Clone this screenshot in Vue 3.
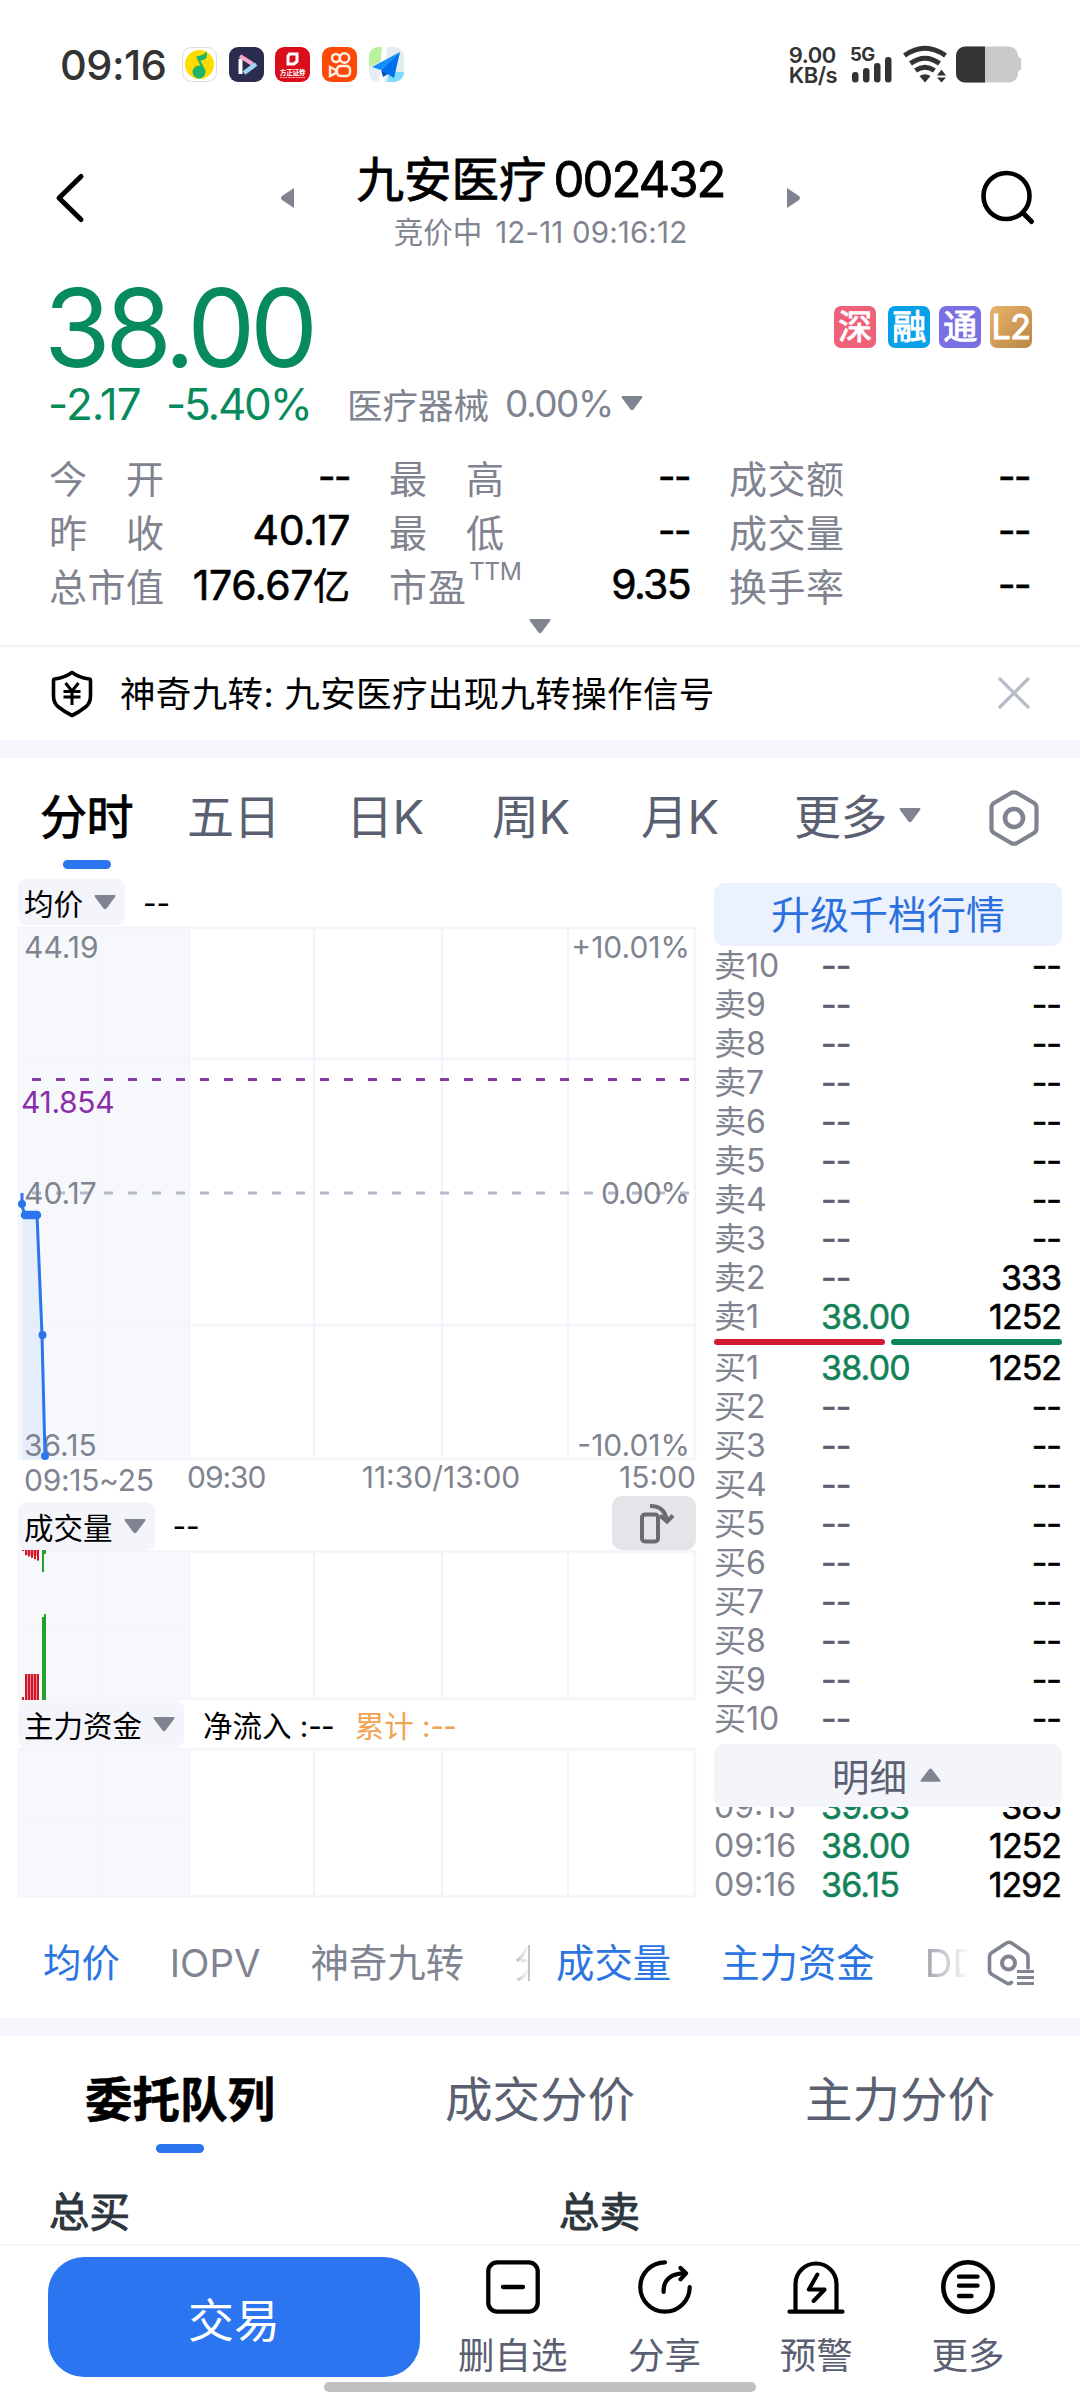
<script setup>
const stats = [
  { label: ['今', '开'], value: '--' },
  { label: ['最', '高'], value: '--' },
  { label: ['成', '交', '额'], value: '--' },
  { label: ['昨', '收'], value: '40.17', wide: true },
  { label: ['最', '低'], value: '--' },
  { label: ['成', '交', '量'], value: '--' },
  { label: ['总', '市', '值'], value: '176.67', unit: '亿', wide: true },
  { label: ['市', '盈'], sup: 'TTM', value: '9.35' },
  { label: ['换', '手', '率'], value: '--' }
]
const asks = [10, 9, 8, 7, 6, 5, 4, 3, 2, 1].map((n) => ({
  label: '卖' + n,
  price: n === 1 ? '38.00' : '--',
  vol: n === 1 ? '1252' : n === 2 ? '333' : '--'
}))
const bids = [1, 2, 3, 4, 5, 6, 7, 8, 9, 10].map((n) => ({
  label: '买' + n,
  price: n === 1 ? '38.00' : '--',
  vol: n === 1 ? '1252' : '--'
}))
const ticks = [
  { label: '09:15', price: '39.83', vol: '385' },
  { label: '09:16', price: '38.00', vol: '1252' },
  { label: '09:16', price: '36.15', vol: '1292' }
]
const gridX = [296, 424, 550]
const redBars = [8, 11, 14, 17, 20]
</script>

<template>
  <div class="screen">
    <div class="status">
      <span class="clock">09:16</span>
      <div class="apps">
        <svg viewBox="0 0 35 35"><rect x=".5" y=".5" width="34" height="34" rx="9" fill="#fff" stroke="#dcdcdc" /><circle cx="17.5" cy="17.5" r="14.5" fill="#ffdc00" /><circle cx="17" cy="25" r="6.5" fill="#1db46b" /><path d="M21.5 25 14 9.500Q20 9 25 4.500L24.500 11Q21 13.500 18.500 13.500L23.500 24Z" fill="#1db46b" /></svg>
        <svg viewBox="0 0 35 35"><rect width="35" height="35" rx="9" fill="#2c2b50" /><path d="M11.500 12v15" stroke="#fff" stroke-width="4" /><path d="m11 9 12.500 8" stroke="#f7a8cb" stroke-width="4" /><path d="m15 26 12-9" stroke="#9bd3f5" stroke-width="4.500" /></svg>
        <svg viewBox="0 0 35 35"><rect width="35" height="35" rx="9" fill="#d90d1c" /><path d="M14.500 7H22v7.500l-3 2.500h-6V9Z" fill="none" stroke="#fff" stroke-width="3" /><text x="17.500" y="28" font-size="6.800" font-weight="700" fill="#fff" text-anchor="middle">方正证券</text><path d="M5 30.500h25" stroke="#fff" stroke-width="1" stroke-dasharray="2 .6" opacity=".7" /></svg>
        <svg viewBox="0 0 35 35"><rect width="35" height="35" rx="9" fill="#ff4906" /><g fill="none" stroke="#fff3e8" stroke-width="2.400"><circle cx="14" cy="11" r="4" /><circle cx="22.500" cy="11" r="4.700" /><rect x="15" y="19" width="13" height="10" rx="3.500" /><path d="m8 20 6 3v3l-6 3Z" /></g></svg>
        <svg viewBox="0 0 35 35"><rect width="35" height="35" rx="9" fill="#e4eef0" /><path d="M9 0h4v14L0 20V9a9 9 0 0 1 9-9Z" fill="#baf19c" /><path d="M20 25h15a10 10 0 0 1-10 10h-7Z" fill="#79dcfb" /><path d="M13 0h5L15 35h-5Z" fill="#fff" /><path d="M31 5 3 20l9 3Z" fill="#138cff" /><path d="M31 5 12 23l13 8Z" fill="#006fee" /><path d="m12 23 2 7 5-3Z" fill="#0051c5" /></svg>
      </div>
      <div class="speed"><span>9.00</span><span>KB/s</span></div>
      <svg class="sys" viewBox="0 0 172 40">
        <text x="0" y="15" font-size="18.500" font-weight="700" letter-spacing="-.5" fill="#333">5G</text>
        <g fill="#333"><rect x="2" y="26" width="6.500" height="10.500" rx="3" /><rect x="13" y="22" width="6.500" height="14.500" rx="3" /><rect x="24" y="17" width="6.500" height="19.500" rx="3" /><rect x="35" y="11" width="6.500" height="25.500" rx="3" /></g>
        <g fill="none" stroke="#333" stroke-width="5"><path d="M54.500 9.500Q75-5 95.500 9.500" /><path d="M60.500 17.500Q75 7 89.500 17.500" /><path d="M65.500 24.500Q75 18 84.500 24.500" /></g>
        <path d="M69.500 30Q75 26.500 80.500 30L75 36.500Z" fill="#333" /><path d="m87 29.500 4.500-6 4.500 6zm0 2h9l-4.500 5Z" fill="#333" />
        <path d="M115 .5h44a9 9 0 0 1 9 9V11q3 0 3 3v8q0 3-3 3v2a9 9 0 0 1-9 9.500h-44a9 9 0 0 1-9-9.500V9.500a9 9 0 0 1 9-9Z" fill="#cacaca" /><path d="M135 .5v36h-20a9 9 0 0 1-9-9.500V9.500a9 9 0 0 1 9-9Z" fill="#333" />
      </svg>
    </div>

    <header class="header">
      <svg class="back" viewBox="0 0 30 50"><path d="M26 3.500 4 25l22 21.500" fill="none" stroke="#000" stroke-width="5" stroke-linecap="round" stroke-linejoin="round" /></svg>
      <svg class="prev" viewBox="0 0 15 22"><path d="M14 1v20L2 13Q0 11 2 9Z" fill="#7f8490" /></svg>
      <div class="title">
        <h1>九安医疗<span>002432</span></h1>
        <p>竞价中<span>12-11 09:16:12</span></p>
      </div>
      <svg class="next" viewBox="0 0 15 22"><path d="M1 1v20l12-8q2-2 0-4Z" fill="#7f8490" /></svg>
      <svg class="search" viewBox="0 0 54 54"><circle cx="25.500" cy="25" r="23" fill="none" stroke="#000" stroke-width="4.600" /><path d="m42.500 42.500 8 8" stroke="#000" stroke-width="5" stroke-linecap="round" /></svg>
    </header>

    <section class="quote">
      <div class="price-row">
        <strong>38.00</strong>
        <div class="tags"><i class="t1">深</i><i class="t2">融</i><i class="t3">通</i><i class="t4">L2</i></div>
      </div>
      <div class="change-row">
        <span class="chg">-2.17</span><span class="pct">-5.40%</span><span class="sector">医疗器械</span><span class="spct">0.00%</span>
        <svg class="caret" viewBox="0 0 22 15"><path d="M1 0h20q1 1 0 2l-8.500 11.500q-1.500 1.500-3 0L1 2q-1-1 0-2Z" fill="#7f8490" /></svg>
      </div>
      <div class="stats">
        <div v-for="(s, i) in stats" :key="i" class="stat">
          <span class="lab" :class="{ pe: s.sup }"><b v-for="c in s.label" :key="c">{{ c }}</b><sup v-if="s.sup">{{ s.sup }}</sup></span>
          <span class="val" :class="{ none: s.value === '--', wide: s.wide }">{{ s.value }}<em v-if="s.unit">{{ s.unit }}</em></span>
        </div>
      </div>
      <svg class="caret expand" viewBox="0 0 22 15"><path d="M1 0h20q1 1 0 2l-8.500 11.500q-1.500 1.500-3 0L1 2q-1-1 0-2Z" fill="#7f8490" /></svg>
    </section>

    <div class="notice">
      <svg class="shield" viewBox="0 0 42 48"><path d="M21 2.500Q29 8 38.500 9q1 0 1 2v15q0 7-5 11-7 5.500-13.500 8.500Q14.500 42.500 7.500 37q-5-4-5-11V11q0-2 1-2Q13 8 21 2.500Z" fill="none" stroke="#000" stroke-width="3.600" stroke-linejoin="round" /><path d="m14.500 13 6.500 8 6.500-8M12.500 21.500h17M12.500 27h17M21 21v14" fill="none" stroke="#000" stroke-width="3" /></svg>
      <span>神奇九转: 九安医疗出现九转操作信号</span>
      <svg class="close" viewBox="0 0 32 32"><path d="m2 2 28 28M30 2 2 30" stroke="#b6bcc8" stroke-width="3.200" stroke-linecap="round" /></svg>
    </div>
    <div class="band"></div>

    <nav class="tabs">
      <span class="on">分时</span><span>五日</span><span>日K</span><span>周K</span><span>月K</span><span class="more">更多</span>
      <svg class="caret" viewBox="0 0 22 15"><path d="M1 0h20q1 1 0 2l-8.500 11.500q-1.500 1.500-3 0L1 2q-1-1 0-2Z" fill="#7f8490" /></svg>
      <svg class="gear" viewBox="0 0 50 56"><path d="M22 3q3-1.500 6 0l17 10q2.500 1.500 2.500 4.500v21q0 3-2.500 4.500L28 53q-3 1.500-6 0L5 43q-2.500-1.500-2.500-4.500v-21Q2.500 14.500 5 13Z" fill="none" stroke="#7f8490" stroke-width="4.200" /><circle cx="25" cy="28" r="9" fill="none" stroke="#7f8490" stroke-width="4.600" /></svg>
    </nav>

    <div class="body">
      <div class="charts">
        <div class="bar b1"><span class="pill">均价<svg class="caret" viewBox="0 0 22 15"><path d="M1 0h20q1 1 0 2l-8.500 11.500q-1.500 1.500-3 0L1 2q-1-1 0-2Z" fill="#7f8490" /></svg></span><span class="dash">--</span></div>
        <svg class="plot" width="678" height="576" viewBox="0 0 678 576">
          <rect width="172" height="534" fill="#f7f8fc" />
          <g stroke="#f3f5fa" stroke-width="2.500">
            <path d="M0 2h678M0 133h678M0 399h678M0 533h678" />
            <path d="M84 0v534M171 0v534M1 0v534M677 0v534" /><path v-for="x in gridX" :key="x" :d="`M${x} 0v534`" />
          </g>
          <path d="M14 153.500h658" stroke="#883aa6" stroke-width="2.800" stroke-dasharray="9 15" />
          <path d="M14 267h664" stroke="#b4bac8" stroke-width="3" stroke-dasharray="9 15" />
          <path d="M4 268v10l2 11h15l3 120 3 124H4Z" fill="#2b75ee" opacity=".08" />
          <g class="ax" font-size="30" fill="#7f8490">
            <text x="6" y="31.500">44.19</text><text x="672" y="31.500" text-anchor="end">+10.01%</text>
            <text x="6" y="278">40.17</text><text class="tight" x="671" y="278" text-anchor="end">0.00%</text>
            <text x="6" y="529.500">36.15</text><text x="672" y="529.500" text-anchor="end">-10.01%</text>
            <text class="snug" x="6" y="565">09:15~25</text><text class="tight" x="169" y="562">09:30</text><text x="423" y="562" text-anchor="middle">11:30/13:00</text><text x="678" y="562" text-anchor="end">15:00</text>
            <text class="snug" x="3" y="187" fill="#8b2da8">41.854</text>
          </g>
          <path d="M4 267v13l3 9h12l5 120 3 121" fill="none" stroke="#2b75ee" stroke-width="3" />
          <path d="M7 289h12" stroke="#2b75ee" stroke-width="8.500" stroke-linecap="round" />
          <g fill="#2b75ee"><circle cx="4" cy="278" r="4" /><circle cx="24.500" cy="409" r="4" /><circle cx="27" cy="530" r="4" /></g>
        </svg>
        <div class="bar b2"><span class="pill">成交量<svg class="caret" viewBox="0 0 22 15"><path d="M1 0h20q1 1 0 2l-8.500 11.500q-1.500 1.500-3 0L1 2q-1-1 0-2Z" fill="#7f8490" /></svg></span><span class="dash">--</span>
          <span class="rotate"><svg viewBox="0 0 84 54"><rect x="30" y="18.500" width="16" height="27" rx="3" fill="none" stroke="#696b70" stroke-width="4" /><path d="M38 10q15 0 17 15M48 19.500l7 6 6-6" fill="none" stroke="#696b70" stroke-width="4" /></svg></span>
        </div>
        <svg class="plot" width="678" height="150" viewBox="0 0 678 150">
          <rect width="172" height="150" fill="#f7f8fc" />
          <path d="M0 1.500h678M0 148.500h678M0 74.500h171M84 0v150M171 0v150M1 0v150M677 0v150M296 0v150M424 0v150M550 0v150" stroke="#f3f5fa" stroke-width="2.500" />
          <rect x="7" y="124" width="14" height="26" fill="#ec8f98" /><rect x="7" y="0" width="14" height="5.500" fill="#ec8f98" />
          <g fill="#cf1528"><rect x="4" y="0" width="2" height="1" /><rect x="4" y="147" width="2" height="3" /><g v-for="(x, i) in redBars" :key="x"><rect :x="x - 1" y="124" width="2" height="26" /><rect :x="x - 1" y="0" width="2" :height="5 + i * 1.4" /></g></g>
          <path d="M24 67h2v-3h2v86h-4ZM24 0h4v4h-2v18h-2Z" fill="#25a02d" />
        </svg>
        <div class="bar b3"><span class="pill">主力资金<svg class="caret" viewBox="0 0 22 15"><path d="M1 0h20q1 1 0 2l-8.500 11.500q-1.500 1.500-3 0L1 2q-1-1 0-2Z" fill="#7f8490" /></svg></span><span class="flow">净流入 :<u>--</u></span><span class="sum">累计 :<u>--</u></span></div>
        <svg class="plot" width="678" height="150" viewBox="0 0 678 150">
          <rect width="172" height="150" fill="#f7f8fc" />
          <path d="M0 1.500h678M0 148.500h678M0 75.500h171M84 0v150M171 0v150M1 0v150M677 0v150M296 0v150M424 0v150M550 0v150" stroke="#f3f5fa" stroke-width="2.500" />
        </svg>
      </div>

      <aside class="book">
        <div class="upgrade">升级千档行情</div>
        <div v-for="r in asks" :key="r.label" class="row"><span>{{ r.label }}</span><span :class="['p', { none: r.price === '--' }]">{{ r.price }}</span><span :class="['v', { none: r.vol === '--' }]">{{ r.vol }}</span></div>
        <div class="ratio"><i></i><i></i></div>
        <div v-for="r in bids" :key="r.label" class="row"><span>{{ r.label }}</span><span :class="['p', { none: r.price === '--' }]">{{ r.price }}</span><span :class="['v', { none: r.vol === '--' }]">{{ r.vol }}</span></div>
        <div class="detail">明细<svg viewBox="0 0 22 14"><path d="M1 14h20q1-1 0-2L12.500 1q-1.500-1.500-3 0L1 12q-1 1 0 2Z" fill="#7f8490" /></svg></div>
        <div class="ticks"><div v-for="(r, i) in ticks" :key="i" class="row"><span>{{ r.label }}</span><span class="p">{{ r.price }}</span><span class="v">{{ r.vol }}</span></div></div>
      </aside>
    </div>

    <div class="indicators">
      <div class="left"><span class="act">均价</span><span>IOPV</span><span>神奇九转</span><span class="cut">分时</span></div>
      <i class="sep"></i>
      <div class="right"><span class="act">成交量</span><span class="act">主力资金</span><span class="cut">DDX</span></div>
      <svg viewBox="0 0 48 46"><path d="M41 28V17q0-3-2.500-4.500L24.500 3q-2.500-1.500-5 0L5 12.500Q2.500 14 2.500 17v13q0 3 2.500 4.500l14.500 8.500q2.500 1.500 5-.5" fill="none" stroke="#7f8490" stroke-width="3.600" stroke-linecap="round" /><circle cx="21.500" cy="23" r="6.500" fill="none" stroke="#7f8490" stroke-width="4" /><path d="M30 31.500h17M30 37.500h17M30 43.500h17" stroke="#7f8490" stroke-width="3.200" /></svg>
    </div>
    <div class="band"></div>

    <div class="subtabs"><span class="on">委托队列</span><span>成交分价</span><span>主力分价</span></div>
    <div class="totals"><span>总买</span><span>总卖</span></div>

    <footer class="footer">
      <button>交易</button>
      <div class="act a1"><svg viewBox="0 0 58 56"><rect x="4.300" y="3.300" width="49.400" height="49.400" rx="9" fill="none" stroke="#000" stroke-width="4.300" /><path d="M19 28h20" stroke="#000" stroke-width="4.300" stroke-linecap="round" /></svg><span>删自选</span></div>
      <div class="act a2"><svg viewBox="0 0 58 56"><g fill="none" stroke="#000" stroke-width="4.200" stroke-linecap="round" stroke-linejoin="round"><path d="M29 3.300A24.700 24.700 0 1 0 53.700 28" /><path d="M27.600 33q-.5-18.500 22-18.800M44.500 9l5.500 5.300-5.500 6" /></g></svg><span>分享</span></div>
      <div class="act a3"><svg viewBox="0 0 58 56"><g fill="none" stroke="#000" stroke-width="4.200" stroke-linecap="round" stroke-linejoin="round"><path d="M8.500 51.500V25a20.500 20.500 0 0 1 41 0v26.500M2.500 52.700h53" /><path d="m30.400 15.600-8.600 14.900h15.800L26.600 42" stroke-width="4" /></g></svg><span>预警</span></div>
      <div class="act a4"><svg viewBox="0 0 58 56"><circle cx="29" cy="28" r="24.700" fill="none" stroke="#000" stroke-width="4.600" /><path d="M20 17.600h18.500M20 26.600h18.500M20 37h12.500" stroke="#000" stroke-width="4.400" stroke-linecap="round" /></svg><span>更多</span></div>
      <div class="home"></div>
    </footer>
  </div>
</template>

<style>
body { background: #fff; }
</style>

<style scoped>
* { box-sizing: border-box; }
.screen { width: 1080px; height: 2392px; overflow: hidden; background: #fff; color: #000; font-family: Inter, "Noto Sans CJK SC", sans-serif; letter-spacing: -.03em; }
i, em { font-style: normal; }
u { text-decoration: none; }
svg { display: block; flex: none; overflow: visible; }
.caret { width: 22px; height: 15px; }

.status { height: 130px; padding: 43px 0 0 60px; display: flex; align-items: flex-start; }
.clock { width: 122px; font-size: 41.500px; line-height: 44px; font-weight: 500; color: #333; }
.apps { display: flex; gap: 11.700px; padding-top: 4px; }
.apps svg { width: 35px; height: 35px; }
.speed { margin-left: 385px; width: 61px; padding-top: 2px; display: flex; flex-direction: column; font-size: 22px; line-height: 20px; font-weight: 600; color: #333; }
.sys { width: 172px; height: 40px; margin-top: 3px; }

.header { height: 140px; display: flex; align-items: flex-start; }
.back { width: 30px; height: 50px; margin: 43px 0 0 55px; }
.prev { width: 15px; height: 22px; margin: 57px 0 0 195px; }
.title { width: 491px; text-align: center; padding-top: 18px; }
h1 { margin: 0; font-size: 47.500px; line-height: 64px; font-weight: 400; letter-spacing: 0; -webkit-text-stroke: .8px #000; }
h1 span { margin-left: 7px; font-size: 49px; letter-spacing: -.04em; }
p { margin: 3px 0 0; font-size: 29.500px; line-height: 34px; color: #7f8490; letter-spacing: 0; }
p span { margin-left: 13px; letter-spacing: .005em; }
.next { width: 15px; height: 22px; margin-top: 57px; }
.search { width: 54px; height: 54px; margin: 41px 0 0 180px; }

.quote { height: 375px; padding: 0 48px; display: flex; flex-direction: column; }
.price-row { height: 107px; display: flex; justify-content: space-between; color: #078b5c; }
.price-row strong { margin-left: -4px; font-size: 108px; line-height: 115px; font-weight: 400; letter-spacing: -.05em; }
.tags { display: flex; padding-top: 36px; gap: 9px; }
.tags i { width: 42px; height: 42px; border-radius: 7px; color: #fff; font-size: 34px; line-height: 41px; text-align: center; font-weight: 400; -webkit-text-stroke: 1px #fff; }
.t1 { background: #ef6079; margin-right: 3px; }
.t2 { background: #08a0e8; }
.t3 { background: #7b6fe4; }
.t4 { background: linear-gradient(135deg, #e9b36c, #ba8645); }
.change-row { height: 53px; display: flex; align-items: center; font-size: 44px; color: #078b5c; }
.chg { width: 118px; letter-spacing: -.02em; }
.pct { width: 181px; letter-spacing: -.05em; }
.sector { width: 158px; font-size: 35.500px; letter-spacing: 0; color: #7f8490; }
.spct { width: 116px; font-size: 37px; color: #7f8490; letter-spacing: -.04em; }
.stats { margin-top: 19px; display: grid; grid-template-columns: repeat(3, 302px); column-gap: 38px; grid-auto-rows: 54px; }
.stat { display: flex; justify-content: space-between; align-items: center; padding-left: 1px; }
.lab { width: 115px; display: flex; justify-content: space-between; font-size: 38px; color: #7f8490; }
.lab b { font-weight: 400; letter-spacing: 0; }
.pe { position: relative; width: 77px; }
sup { position: absolute; left: 80px; top: -1px; font-size: 24.500px; line-height: 30px; }
.val { display: flex; align-items: baseline; font-size: 41px; font-weight: 400; letter-spacing: -.04em; -webkit-text-stroke: .6px #000; }
.val.wide { letter-spacing: -.01em; }
.val em { font-size: 37px; letter-spacing: 0; }
.val.none { font-size: 38px; }
.expand { margin: 8px 0 0 481px; }

.notice { height: 95px; border-top: 2px solid #f2f3f7; display: flex; align-items: center; padding: 0 50px 0 51px; font-size: 35.500px; letter-spacing: .01em; }
.shield { width: 42px; height: 48px; }
.notice span { margin-left: 27px; flex: 1; padding-bottom: 4px; }
.close { width: 32px; height: 32px; margin-bottom: 1px; }
.band { height: 18px; background: #f4f6fb; }

.tabs { height: 121px; padding: 17px 0 0 40px; display: flex; align-items: flex-start; font-size: 47px; line-height: 84px; color: #5a6072; letter-spacing: -.01em; }
.tabs span { width: 147px; }
.tabs span:nth-child(2) { width: 159px; }
.tabs span:nth-child(3) { width: 146px; }
.tabs span:nth-child(4) { width: 149px; }
.tabs span:nth-child(5) { width: 153px; }
.tabs .more { width: 105px; }
.tabs .on { color: #000; position: relative; -webkit-text-stroke: 1px #000; }
.tabs .on::after { content: ''; position: absolute; left: 23px; top: 85px; width: 48px; height: 9px; border-radius: 5px; background: #2b75ee; }
.tabs .caret { margin-top: 33px; }
.gear { width: 50px; height: 56px; margin: 15px 0 0 68px; }

.body { display: flex; padding-left: 18px; height: 1028px; }
.charts { width: 678px; }
.bar { display: flex; align-items: center; font-size: 29.500px; letter-spacing: 0; }
.b1 { height: 47px; }
.b2 { height: 48px; }
.b3 { height: 48px; }
.pill { height: 100%; display: flex; align-items: center; gap: 11px; padding: 0 9px 0 6px; background: #f4f5fa; border-radius: 9px; }
.b1 .pill { height: 46px; align-self: flex-start; }
.dash { margin-left: 18px; }
.rotate { width: 84px; height: 54px; margin: -6px 0 0 auto; border-radius: 10px; background: #e4e5e9; }
.flow { margin-left: 19px; }
.sum { margin-left: 21px; color: #f1a450; }
.flow u, .sum u { letter-spacing: -.03em; }
.ax { letter-spacing: 0; }
.tight { letter-spacing: -.035em; }
.snug { letter-spacing: -.01em; }

.book { margin-left: 18px; width: 348px; padding-top: 4px; }
.upgrade { height: 63px; border-radius: 11px; background: #ebf2fd; color: #2b70df; text-align: center; font-size: 39px; line-height: 64px; letter-spacing: 0; }
.row { height: 39px; line-height: 40px; display: flex; padding: 0 1px 0 0; font-size: 32px; color: #7f8490; letter-spacing: 0; }
.row span { white-space: nowrap; }
.row span:first-child { width: 107px; }
.p { width: 110px; font-size: 34px; color: #128158; letter-spacing: -.025em; -webkit-text-stroke: .5px currentColor; }
.p.none { color: #5a6072; }
.v { flex: 1; text-align: right; font-size: 34px; color: #000; letter-spacing: -.03em; -webkit-text-stroke: .6px currentColor; }
.ratio { height: 12px; display: flex; gap: 6px; padding: 3px 0; }
.ratio i { flex: 1; border-radius: 3px; background: #d21a32; }
.ratio i + i { background: #08865a; }
.detail { height: 63px; margin-top: 6px; border-radius: 10px; background: #f4f5fa; display: flex; align-items: center; justify-content: center; gap: 13px; font-size: 37.500px; color: #5a6072; letter-spacing: 0; padding: 0 3px 2px 0; }
.detail svg { width: 21px; height: 14px; }
.ticks { height: 98px; overflow: hidden; }
.ticks .row:first-child { margin-top: -20px; }

.indicators { height: 111px; display: flex; align-items: center; padding: 0 0 0 43px; font-size: 38.400px; letter-spacing: 0; color: #7f8490; }
.indicators .act { color: #2b75e2; }
.left { width: 485px; display: flex; align-items: baseline; gap: 50px; overflow: hidden; white-space: nowrap; padding-bottom: 5px; }
.sep { width: 2px; height: 36px; background: #c3c5cd; }
.left .cut { width: 16px; overflow: hidden; -webkit-mask-image: linear-gradient(90deg, rgba(0,0,0,.6), rgba(0,0,0,.05)); mask-image: linear-gradient(90deg, rgba(0,0,0,.6), rgba(0,0,0,.05)); }
.right { margin-left: 26px; width: 412px; display: flex; align-items: baseline; gap: 50px; overflow: hidden; white-space: nowrap; padding-bottom: 5px; }
.right .cut { width: 42px; overflow: hidden; -webkit-mask-image: linear-gradient(90deg, rgba(0,0,0,.75), rgba(0,0,0,.05)); mask-image: linear-gradient(90deg, rgba(0,0,0,.75), rgba(0,0,0,.05)); }
.indicators svg { width: 48px; height: 46px; margin-left: 19px; }

.subtabs { height: 127px; display: flex; font-size: 47.500px; line-height: 127px; letter-spacing: 0; color: #5a6072; }
.subtabs span { width: 360px; text-align: center; }
.subtabs .on { color: #000; font-weight: 700; position: relative; -webkit-text-stroke: .6px #000; }
.subtabs .on::after { content: ''; position: absolute; left: 156px; top: 108px; width: 48px; height: 9px; border-radius: 5px; background: #2b75ee; }
.totals { height: 81px; padding-left: 49px; display: flex; font-size: 40.500px; line-height: 100px; letter-spacing: 0; color: #2e363d; -webkit-text-stroke: 1px #2e363d; }
.totals span { width: 510px; }

.footer { height: 148px; border-top: 2px solid #f5f5f7; display: flex; padding: 11px 0 0 48px; position: relative; }
button { width: 372px; height: 120px; border: 0; border-radius: 36px; background: #2b75f0; color: #fff; font: 400 46px/118px "Noto Sans CJK SC", sans-serif; padding: 0; }
.footer .act { width: 151.700px; display: flex; flex-direction: column; align-items: center; font-size: 36.500px; line-height: 50px; letter-spacing: 0; color: #5a6072; padding-top: 2px; }
.footer .act span { margin-top: 16px; }
.a1 { margin-left: 17px; }
.footer .act svg { width: 58px; height: 56px; }
.home { position: absolute; left: 324px; bottom: 0; width: 432px; height: 10px; border-radius: 5px; background: #c1c1c1; }
</style>
